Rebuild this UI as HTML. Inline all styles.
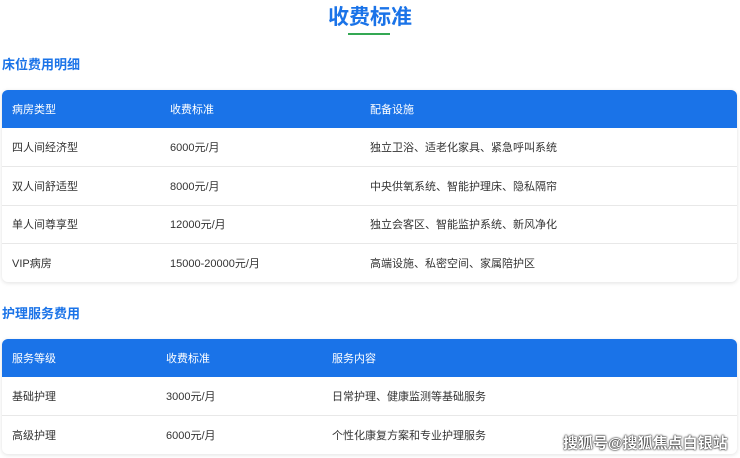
<!DOCTYPE html><html><head><meta charset="utf-8"><style>
body{margin:0;width:740px;height:458px;background:#fff;font-family:"Liberation Sans","Noto Sans CJK SC",sans-serif;position:relative;overflow:hidden}
.t{position:absolute;left:0;width:740px;text-align:center;top:1px;font-size:21px;font-weight:bold;color:#1a73e8}
.ul{position:absolute;left:348px;top:33px;width:42px;height:2px;background:#34a853}
h3{position:absolute;left:2px;margin:0;font-size:13px;font-weight:bold;color:#1a73e8}
.tb{position:absolute;left:2px;width:735px;border-radius:6px;box-shadow:0 1px 4px rgba(0,0,0,.12);overflow:hidden;background:#fff}
.r{height:37.8px;position:relative;border-bottom:1px solid #e8e8e8;font-size:11px;color:#333}
.r span{position:absolute;top:50%;transform:translateY(-50%)}
.h{background:#1a73e8;color:#fff;border-bottom:none;height:38px}
.wm{position:absolute;left:563px;top:432px;font-size:15px;font-weight:bold;color:#fff;text-shadow:0 0 2px #000,0 0 1px #000}
</style></head><body>
<div class="t">收费标准</div><div class="ul"></div>
<h3 style="top:54px">床位费用明细</h3>
<div class="tb" style="top:90px">
<div class="r h"><span style="left:10px">病房类型</span><span style="left:168px">收费标准</span><span style="left:368px">配备设施</span></div>
<div class="r"><span style="left:10px">四人间经济型</span><span style="left:168px">6000元/月</span><span style="left:368px">独立卫浴、适老化家具、紧急呼叫系统</span></div>
<div class="r"><span style="left:10px">双人间舒适型</span><span style="left:168px">8000元/月</span><span style="left:368px">中央供氧系统、智能护理床、隐私隔帘</span></div>
<div class="r"><span style="left:10px">单人间尊享型</span><span style="left:168px">12000元/月</span><span style="left:368px">独立会客区、智能监护系统、新风净化</span></div>
<div class="r" style="border:none"><span style="left:10px">VIP病房</span><span style="left:168px">15000-20000元/月</span><span style="left:368px">高端设施、私密空间、家属陪护区</span></div>
</div>
<h3 style="top:303px">护理服务费用</h3>
<div class="tb" style="top:339px">
<div class="r h"><span style="left:10px">服务等级</span><span style="left:164px">收费标准</span><span style="left:330px">服务内容</span></div>
<div class="r"><span style="left:10px">基础护理</span><span style="left:164px">3000元/月</span><span style="left:330px">日常护理、健康监测等基础服务</span></div>
<div class="r" style="border:none"><span style="left:10px">高级护理</span><span style="left:164px">6000元/月</span><span style="left:330px">个性化康复方案和专业护理服务</span></div>
</div>
<div class="wm">搜狐号@搜狐焦点白银站</div>
</body></html>
